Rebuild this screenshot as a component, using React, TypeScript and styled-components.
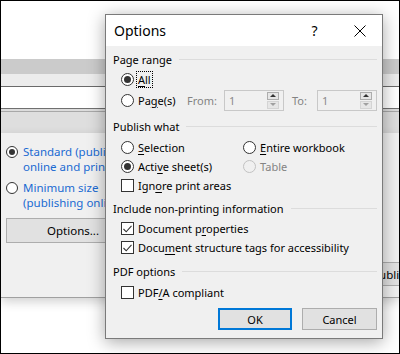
import styled, { createGlobalStyle } from "styled-components"

const GlobalStyle = createGlobalStyle`
  html, body {
    margin: 0;
    padding: 0;
    background: #fff;
  }
  body {
    font-family: "Noto Sans", "Segoe UI", sans-serif;
    font-size: 11px;
    color: #000;
  }
  #root {
    width: 400px;
    height: 354px;
  }
`

const Style = {
  Frame: styled.div`
    position: relative;
    width: 400px;
    height: 354px;
    box-sizing: border-box;
    border: 1px solid #000;
    overflow: hidden;
    background: #fff;
  `,
  // window behind the dialog
  Back: styled.div`
    display: flex;
    flex-direction: column;
  `,
  Band: styled.div<{ $h: number; $bg: string }>`
    height: ${(p) => p.$h}px;
    background: ${(p) => p.$bg};
  `,
  PathField: styled.div`
    height: 21px;
    background: #fff;
    border-top: 1px solid #6a6a6a;
    border-bottom: 1px solid #707070;
  `,
  Strip: styled.div`
    height: 2px;
    background: #dcdcdc;
    border-bottom: 1px solid #a8a8a8;
  `,
  Panel: styled.div`
    display: flex;
    flex-direction: column;
    height: 165px;
    box-sizing: border-box;
    padding: 11px 0 0 5px;
    background: #f0f0f0;
    border-bottom: 1px solid #a0a0a0;
    box-shadow: 0 4px 10px rgba(0, 0, 0, 0.18);
  `,
  BackChoice: styled.div<{ $top: number }>`
    display: flex;
    align-items: flex-start;
    gap: 5px;
    margin-top: ${(p) => p.$top}px;
    color: #1a6ad2;
    font-size: 11.5px;
    line-height: 15px;
    white-space: nowrap;
  `,
  BackRadio: styled.span<{ $checked?: boolean }>`
    flex: none;
    width: 12px;
    height: 12px;
    margin-top: 2px;
    box-sizing: border-box;
    border: 1px solid #333;
    border-radius: 50%;
    background: #fff;
    display: flex;
    align-items: center;
    justify-content: center;
    &::after {
      content: "";
      display: ${(p) => (p.$checked ? "block" : "none")};
      width: 6px;
      height: 6px;
      border-radius: 50%;
      background: #333;
    }
  `,
  BackButton: styled.div<{ $w: number; $h: number }>`
    flex: none;
    width: ${(p) => p.$w}px;
    height: ${(p) => p.$h}px;
    box-sizing: border-box;
    border: 1px solid #adadad;
    background: #e1e1e1;
    display: flex;
    align-items: center;
    justify-content: center;
    font-size: 11.5px;
  `,
  BackFooter: styled.div`
    display: flex;
    margin-top: 19px;
    padding-left: 338px;
  `,
  // Options dialog
  Dialog: styled.div`
    position: absolute;
    left: 104px;
    top: 13px;
    width: 278px;
    height: 325px;
    box-sizing: border-box;
    border: 1px solid #7a7a7a;
    display: flex;
    flex-direction: column;
    background: #f0f0f0;
    box-shadow: 0 3px 16px rgba(0, 0, 0, 0.35);
  `,
  TitleBar: styled.div`
    height: 31px;
    flex: none;
    display: flex;
    align-items: center;
    background: #fff;
    padding-left: 8px;
  `,
  Title: styled.div`
    flex: 1;
    font-size: 14px;
    padding-bottom: 1px;
  `,
  TitleButton: styled.div`
    width: 45px;
    height: 31px;
    display: flex;
    align-items: center;
    justify-content: center;
    font-size: 14px;
  `,
  Body: styled.div`
    flex: 1;
    display: flex;
    flex-direction: column;
    padding: 5px 5px 7px 7px;
  `,
  GroupTitle: styled.div<{ $top?: number }>`
    display: flex;
    align-items: center;
    gap: 7px;
    height: 16px;
    margin-top: ${(p) => p.$top ?? 0}px;
    white-space: nowrap;
    &::after {
      content: "";
      flex: 1;
      height: 1px;
      background: #dcdcdc;
    }
  `,
  Option: styled.div<{ $top?: number; $h?: number }>`
    display: flex;
    align-items: center;
    gap: 4px;
    height: ${(p) => p.$h ?? 19}px;
    margin-top: ${(p) => p.$top ?? 0}px;
    padding-left: 8px;
    white-space: nowrap;
  `,
  Grid: styled.div<{ $top: number }>`
    display: grid;
    grid-template-columns: 122px 1fr;
    grid-auto-rows: 19px;
    margin-top: ${(p) => p.$top}px;
    padding-left: 8px;
  `,
  Cell: styled.div<{ $disabled?: boolean }>`
    display: flex;
    align-items: center;
    gap: 4px;
    white-space: nowrap;
    color: ${(p) => (p.$disabled ? "#838383" : "#000")};
  `,
  Radio: styled.span<{ $checked?: boolean; $disabled?: boolean }>`
    flex: none;
    width: 13px;
    height: 13px;
    box-sizing: border-box;
    border-radius: 50%;
    border: 1px solid ${(p) => (p.$disabled ? "#c2c2c2" : "#333")};
    background: ${(p) => (p.$disabled ? "#f0f0f0" : "#fff")};
    display: flex;
    align-items: center;
    justify-content: center;
    &::after {
      content: "";
      display: ${(p) => (p.$checked ? "block" : "none")};
      width: 7px;
      height: 7px;
      border-radius: 50%;
      background: #333;
    }
  `,
  Check: styled.span`
    flex: none;
    width: 13px;
    height: 13px;
    box-sizing: border-box;
    border: 1px solid #333;
    background: #fff;
    display: flex;
    align-items: center;
    justify-content: center;
  `,
  Focus: styled.span`
    outline: 1px dotted #000;
    outline-offset: 1px;
    line-height: 13px;
  `,
  Key: styled.span`
    text-decoration: underline;
    text-underline-offset: 2px;
  `,
  Gray: styled.span<{ $w: number }>`
    width: ${(p) => p.$w}px;
    flex: none;
    color: #838383;
  `,
  PageLabel: styled.span`
    width: 45px;
    flex: none;
  `,
  Spin: styled.div`
    flex: none;
    width: 60px;
    height: 21px;
    box-sizing: border-box;
    border: 1px solid #c8c8c8;
    background: #f0f0f0;
    display: flex;
    align-items: center;
    padding: 0 4px 0 4px;
    color: #8a8a8a;
  `,
  SpinValue: styled.span`
    flex: 1;
  `,
  SpinArrows: styled.div`
    display: flex;
    flex-direction: column;
    gap: 1px;
  `,
  SpinArrow: styled.div<{ $up?: boolean }>`
    width: 12px;
    height: 8px;
    box-sizing: border-box;
    border: 1px solid ${(p) => (p.$up ? "#adadad" : "#d4d4d4")};
    background: #e6e6e6;
    display: flex;
    align-items: center;
    justify-content: center;
    &::after {
      content: "";
      border-left: 3px solid transparent;
      border-right: 3px solid transparent;
      ${(p) =>
        p.$up
          ? "border-bottom: 3px solid #333;"
          : "border-top: 3px solid #a0a0a0;"}
    }
  `,
  Buttons: styled.div`
    display: flex;
    justify-content: flex-end;
    gap: 10px;
    margin-top: 6px;
  `,
  Button: styled.div<{ $default?: boolean }>`
    width: ${(p) => (p.$default ? 74 : 75)}px;
    height: 22px;
    box-sizing: border-box;
    border: ${(p) => (p.$default ? "2px solid #0078d7" : "1px solid #adadad")};
    background: #e1e1e1;
    display: flex;
    align-items: center;
    justify-content: center;
  `,
}

function CheckMark() {
  return (
    <svg width="9" height="8" viewBox="0 0 9 8">
      <path d="M0.5 4 L3.2 6.8 L8.5 0.8" fill="none" stroke="#333" strokeWidth="1.1" />
    </svg>
  )
}

function CloseIcon() {
  return (
    <svg width="12" height="12" viewBox="0 0 12 12">
      <path d="M0.5 0.5 L11.5 11.5 M11.5 0.5 L0.5 11.5" stroke="#000" strokeWidth="1" />
    </svg>
  )
}

function SpinBox() {
  return (
    <Style.Spin>
      <Style.SpinValue>1</Style.SpinValue>
      <Style.SpinArrows>
        <Style.SpinArrow $up />
        <Style.SpinArrow />
      </Style.SpinArrows>
    </Style.Spin>
  )
}

export default function App() {
  return (
    <>
      <GlobalStyle />
      <Style.Frame>
        <Style.Back>
          <Style.Band $h={58} $bg="#ffffff" />
          <Style.Band $h={15} $bg="#cbcbcb" />
          <Style.Band $h={12} $bg="#ececec" />
          <Style.PathField />
          <Style.Strip />
          <Style.Band $h={21} $bg="#dedede" />
          <Style.Panel>
            <Style.BackChoice $top={0}>
              <Style.BackRadio $checked />
              <div>
                Standard (publishing
                <br />
                online and printing)
              </div>
            </Style.BackChoice>
            <Style.BackChoice $top={6}>
              <Style.BackRadio />
              <div>
                Minimum size
                <br />
                (publishing online)
              </div>
            </Style.BackChoice>
            <Style.BackButton $w={134} $h={25} style={{ marginTop: 8 }}>
              Options...
            </Style.BackButton>
            <Style.BackFooter>
              <Style.BackButton $w={96} $h={24}>
                Publish
              </Style.BackButton>
            </Style.BackFooter>
          </Style.Panel>
        </Style.Back>

        <Style.Dialog>
          <Style.TitleBar>
            <Style.Title>Options</Style.Title>
            <Style.TitleButton>?</Style.TitleButton>
            <Style.TitleButton>
              <CloseIcon />
            </Style.TitleButton>
          </Style.TitleBar>
          <Style.Body>
            <Style.GroupTitle>Page range</Style.GroupTitle>
            <Style.Option $top={3}>
              <Style.Radio $checked />
              <Style.Focus>
                <Style.Key>A</Style.Key>ll
              </Style.Focus>
            </Style.Option>
            <Style.Option $h={22}>
              <Style.Radio />
              <Style.PageLabel>
                Pa<Style.Key>g</Style.Key>e(s)
              </Style.PageLabel>
              <Style.Gray $w={33}>From:</Style.Gray>
              <SpinBox />
              <Style.Gray $w={21} style={{ marginLeft: 4 }}>
                To:
              </Style.Gray>
              <SpinBox />
            </Style.Option>

            <Style.GroupTitle $top={7}>Publish what</Style.GroupTitle>
            <Style.Grid $top={4}>
              <Style.Cell>
                <Style.Radio />
                <span>
                  <Style.Key>S</Style.Key>election
                </span>
              </Style.Cell>
              <Style.Cell>
                <Style.Radio />
                <span>
                  <Style.Key>E</Style.Key>ntire workbook
                </span>
              </Style.Cell>
              <Style.Cell>
                <Style.Radio $checked />
                <span>
                  Acti<Style.Key>v</Style.Key>e sheet(s)
                </span>
              </Style.Cell>
              <Style.Cell $disabled>
                <Style.Radio $disabled />
                <span>Table</span>
              </Style.Cell>
              <Style.Cell>
                <Style.Check />
                <span>
                  Ign<Style.Key>o</Style.Key>re print areas
                </span>
              </Style.Cell>
            </Style.Grid>

            <Style.GroupTitle $top={5}>Include non-printing information</Style.GroupTitle>
            <Style.Option $top={3}>
              <Style.Check>
                <CheckMark />
              </Style.Check>
              <span>
                Document p<Style.Key>r</Style.Key>operties
              </span>
            </Style.Option>
            <Style.Option>
              <Style.Check>
                <CheckMark />
              </Style.Check>
              <span>
                Docu<Style.Key>m</Style.Key>ent structure tags for accessibility
              </span>
            </Style.Option>

            <Style.GroupTitle $top={6}>PDF options</Style.GroupTitle>
            <Style.Option $top={4}>
              <Style.Check />
              <span>
                PDF<Style.Key>/</Style.Key>A compliant
              </span>
            </Style.Option>

            <Style.Buttons>
              <Style.Button $default>OK</Style.Button>
              <Style.Button>Cancel</Style.Button>
            </Style.Buttons>
          </Style.Body>
        </Style.Dialog>
      </Style.Frame>
    </>
  )
}
